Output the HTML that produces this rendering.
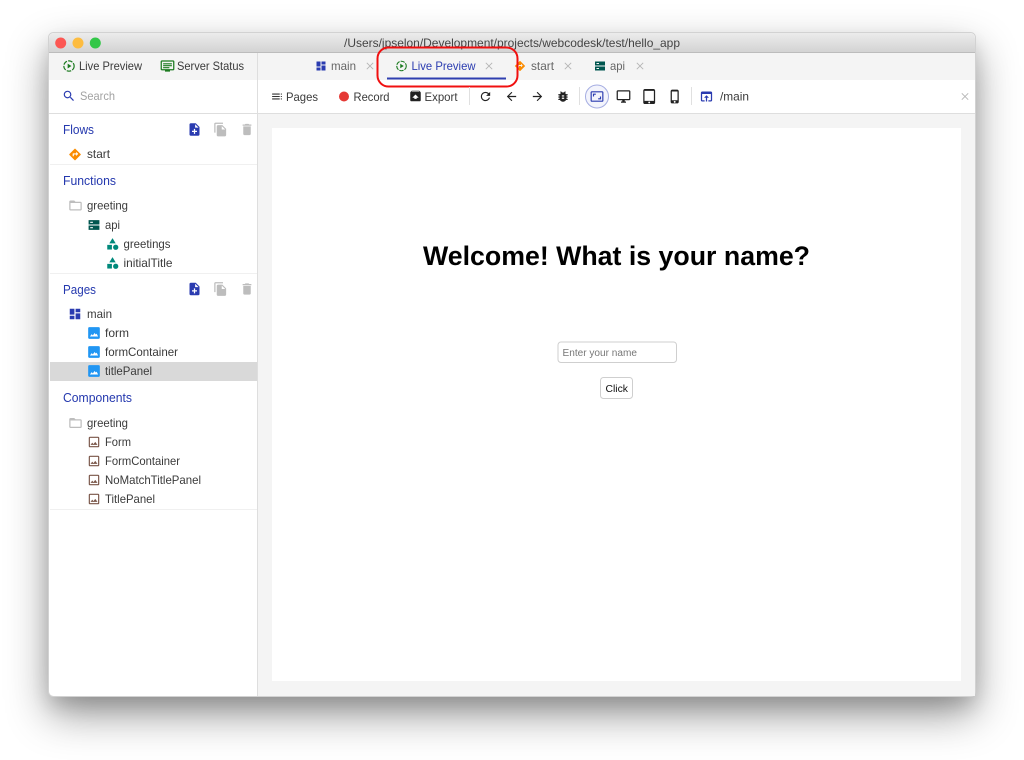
<!DOCTYPE html>
<html><head><meta charset="utf-8"><title>Live Preview</title>
<style>
html,body{margin:0;padding:0;background:#fff;width:1024px;height:760px;overflow:hidden}
#win{position:absolute;left:49px;top:33px;width:926px;height:663px;border-radius:5px;box-shadow:0 18px 42px rgba(0,0,0,.42),0 10px 18px rgba(0,0,0,.12)}
svg{position:absolute;left:0;top:0}
text{font-family:"Liberation Sans",sans-serif;font-size:12px;fill:#3a3a3a}
.b{fill:#2a3bb0}
.h{font-size:13px;fill:#2438ae}
.g{fill:#666}
</style></head><body>
<div id="win"></div>
<svg width="1024" height="760" viewBox="0 0 1024 760" xmlns="http://www.w3.org/2000/svg">
<defs>
<linearGradient id="tb" x1="0" y1="0" x2="0" y2="1"><stop offset="0" stop-color="#ececec"/><stop offset="1" stop-color="#d3d3d3"/></linearGradient>
<symbol id="note" viewBox="0 0 24 24"><path d="M14 2H6c-1.1 0-1.99.9-1.99 2L4 20c0 1.1.89 2 1.99 2H18c1.1 0 2-.9 2-2V8l-6-6zm2 14h-3v3h-2v-3H8v-2h3v-3h2v3h3v2zm-3-7V3.5L18.5 9H13z"/></symbol>
<symbol id="copy" viewBox="0 0 24 24"><path d="M16 1H4c-1.1 0-2 .9-2 2v14h2V3h12V1zm-1 4l6 6v10c0 1.1-.9 2-2 2H7.99C6.89 23 6 22.1 6 21l.01-14c0-1.1.89-2 1.99-2h7zm-1 7h5.5L14 6.5V12z"/></symbol>
<symbol id="trash" viewBox="0 0 24 24"><path d="M6 19c0 1.1.9 2 2 2h8c1.1 0 2-.9 2-2V7H6v12zM19 4h-3.5l-1-1h-5l-1 1H5v2h14V4z"/></symbol>
<symbol id="dir" viewBox="0 0 24 24"><path d="M21.71 11.29l-9-9c-.39-.39-1.02-.39-1.41 0l-9 9c-.39.39-.39 1.02 0 1.41l9 9c.39.39 1.02.39 1.41 0l9-9c.39-.38.39-1.01 0-1.41zM14 14.5V12h-4v3H8v-4c0-.55.45-1 1-1h5V7.5l3.5 3.5-3.5 3.5z"/></symbol>
<symbol id="folder" viewBox="0 0 24 24"><path d="M20 6h-8l-2-2H4c-1.1 0-1.99.9-1.99 2L2 18c0 1.1.9 2 2 2h16c1.1 0 2-.9 2-2V8c0-1.1-.9-2-2-2zm0 12H4V8h16v10z"/></symbol>
<symbol id="dns" viewBox="0 0 24 24"><path fill-rule="evenodd" d="M2 3h20v8H2zM5 6v2h5V6zM2 13h20v8H2zM5 16v2h5v-2z"/></symbol>
<symbol id="cat" viewBox="0 0 24 24"><path d="M12 2l-5.500 9h11z"/><circle cx="17.500" cy="17.500" r="4.500"/><path d="M3 13.500h8v8H3z"/></symbol>
<symbol id="dash" viewBox="0 0 24 24"><path d="M3 13h8V3H3v10zm0 8h8v-6H3v6zm10 0h8V11h-8v10zm0-18v6h8V3h-8z"/></symbol>
<symbol id="img" viewBox="0 0 24 24"><rect x="2" y="2" width="20" height="20" rx="2" fill="#2196f3"/><path d="M5 18l3-4 2 2 3-4 2 2.500 1.500-1.500 2.500 5z" fill="#fff"/></symbol>
<symbol id="cmp" viewBox="0 0 24 24"><path d="M19 5v14H5V5h14m0-2H5c-1.100 0-2 .9-2 2v14c0 1.100.9 2 2 2h14c1.100 0 2-.9 2-2V5c0-1.100-.9-2-2-2zm-4.860 8.860l-3 3.870L9 13.140 6 17h12l-3.860-5.140z"/></symbol>
<symbol id="play" viewBox="0 0 24 24"><circle cx="12" cy="12" r="9.500" fill="none" stroke="#1b7a1f" stroke-width="2.200" stroke-dasharray="8.500 2.200"/><path d="M9.500 7.500l7 4.500-7 4.500z" fill="#1b7a1f"/></symbol>
<symbol id="mon" viewBox="0 0 24 24"><path d="M21 3H3c-1.100 0-2 .9-2 2v12c0 1.100.9 2 2 2h5v2h8v-2h5c1.100 0 2-.9 2-2V5c0-1.100-.9-2-2-2zm0 14H3V5h18v12zM5 7.500h14v1.800H5zM5 10.600h14v1.800H5zM5 13.700h10v1.800H5z"/></symbol>
<symbol id="lines" viewBox="0 0 24 24"><path d="M3 6.500h14v2H3zM3 11h14v2H3zM3 15.500h14v2H3zM19 6.500h2v2h-2zM19 11h2v2h-2zM19 15.500h2v2h-2z"/></symbol>
<symbol id="exp" viewBox="0 0 24 24"><path d="M20.550 5.220l-1.390-1.680C18.880 3.210 18.470 3 18 3H6c-.47 0-.88.21-1.150.55L3.460 5.220C3.170 5.570 3 6.010 3 6.500V19c0 1.100.89 2 2 2h14c1.100 0 2-.9 2-2V6.500c0-.49-.17-.93-.45-1.280zM12 9.500l5.500 5.500H14v2h-4v-2H6.500L12 9.500zM5.120 5l.82-1h12l.93 1H5.120z"/></symbol>
<symbol id="refresh" viewBox="0 0 24 24"><path d="M17.650 6.350C16.200 4.900 14.210 4 12 4c-4.420 0-7.990 3.580-7.990 8s3.570 8 7.990 8c3.730 0 6.840-2.550 7.730-6h-2.080c-.82 2.330-3.040 4-5.650 4-3.310 0-6-2.690-6-6s2.690-6 6-6c1.660 0 3.140.69 4.220 1.780L13 11h7V4l-2.350 2.350z"/></symbol>
<symbol id="back" viewBox="0 0 24 24"><path d="M20 11H7.830l5.590-5.590L12 4l-8 8 8 8 1.410-1.410L7.830 13H20v-2z"/></symbol>
<symbol id="fwd" viewBox="0 0 24 24"><path d="M12 4l-1.410 1.410L16.170 11H4v2h12.170l-5.580 5.590L12 20l8-8z"/></symbol>
<symbol id="bug" viewBox="0 0 24 24"><path d="M20 8h-2.810c-.45-.78-1.070-1.450-1.820-1.960L17 4.410 15.590 3l-2.170 2.170C12.960 5.060 12.490 5 12 5c-.49 0-.96.06-1.410.17L8.410 3 7 4.410l1.620 1.630C7.880 6.550 7.260 7.220 6.810 8H4v2h2.090c-.05.33-.09.66-.09 1v1H4v2h2v1c0 .34.04.67.09 1H4v2h2.810c1.040 1.790 2.970 3 5.190 3s4.150-1.210 5.190-3H20v-2h-2.090c.05-.33.09-.66.09-1v-1h2v-2h-2v-1c0-.34-.04-.67-.09-1H20V8zm-6 8h-4v-2h4v2zm0-4h-4v-2h4v2z"/></symbol>
<symbol id="aspect" viewBox="0 0 24 24"><path d="M19 12h-2v3h-3v2h5v-5zM7 9h3V7H5v5h2V9zm14-6H3c-1.100 0-2 .9-2 2v14c0 1.100.9 2 2 2h18c1.100 0 2-.9 2-2V5c0-1.100-.9-2-2-2zm0 16.010H3V4.990h18v14.020z"/></symbol>
<symbol id="desk" viewBox="0 0 24 24"><path d="M21 2H3c-1.100 0-2 .9-2 2v12c0 1.100.9 2 2 2h7v2H8v2h8v-2h-2v-2h7c1.100 0 2-.9 2-2V4c0-1.100-.9-2-2-2zm0 14H3V4h18v12z"/></symbol>
<symbol id="tab" viewBox="0 0 24 24"><path d="M18.500 0h-14C3.120 0 2 1.120 2 2.500v19C2 22.880 3.120 24 4.500 24h14c1.380 0 2.500-1.120 2.500-2.500v-19C21 1.120 19.880 0 18.500 0zm-7 23c-.83 0-1.500-.67-1.500-1.500s.67-1.500 1.500-1.500 1.500.67 1.500 1.500-.67 1.500-1.500 1.500zm7.500-4H4V3h15v16z"/></symbol>
<symbol id="phone" viewBox="0 0 24 24"><path d="M15.500 1h-8C6.120 1 5 2.120 5 3.500v17C5 21.880 6.120 23 7.500 23h8c1.380 0 2.500-1.120 2.500-2.500v-17C18 2.120 16.880 1 15.500 1zm-4 21c-.83 0-1.500-.67-1.500-1.500s.67-1.500 1.500-1.500 1.500.67 1.500 1.500-.67 1.500-1.500 1.500zm4.500-4H7V4h9v14z"/></symbol>
<symbol id="open" viewBox="0 0 24 24"><path d="M19 4H5c-1.110 0-2 .9-2 2v12c0 1.100.89 2 2 2h4v-2H5V8h14v10h-4v2h4c1.100 0 2-.9 2-2V6c0-1.100-.89-2-2-2zm-7 6l-4 4h3v6h2v-6h3l-4-4z"/></symbol>
<symbol id="search" viewBox="0 0 24 24"><path d="M15.500 14h-.79l-.28-.27C15.410 12.590 16 11.110 16 9.500 16 5.910 13.090 3 9.500 3S3 5.910 3 9.500 5.910 16 9.500 16c1.610 0 3.090-.59 4.230-1.570l.27.28v.79l5 4.990L20.490 19l-4.990-5zm-6 0C7.010 14 5 11.990 5 9.500S7.010 5 9.500 5 14 7.010 14 9.500 11.990 14 9.500 14z"/></symbol>
<symbol id="x" viewBox="0 0 10 10"><path d="M1 1l8 8M9 1l-8 8" stroke="#b5b5b5" stroke-width="1.100" fill="none"/></symbol>
</defs>

<!-- window -->
<rect x="48.500" y="32.500" width="927" height="664" rx="5" fill="#fff" stroke="#d2d2d2"/>
<path d="M49 52V38a5 5 0 0 1 5-5h916a5 5 0 0 1 5 5v14z" fill="url(#tb)"/>
<path d="M49 52.500h926" stroke="#bcbcbc"/>
<circle cx="60.700" cy="43" r="5.500" fill="#fc5753"/>
<circle cx="78" cy="43" r="5.500" fill="#fdbc40"/>
<circle cx="95.300" cy="43" r="5.500" fill="#33c748"/>
<text x="344" y="47" textLength="336" lengthAdjust="spacingAndGlyphs" style="fill:#444">/Users/jpselon/Development/projects/webcodesk/test/hello_app</text>

<!-- top rows -->
<rect x="49" y="53" width="926" height="27" fill="#f4f4f4"/>
<rect x="258" y="114" width="717" height="582" fill="#f4f4f4"/>
<rect x="272" y="128" width="689" height="553" fill="#fff"/>
<path d="M49 113.500h926" stroke="#dedede"/>
<path d="M257.500 53v643" stroke="#dedede"/>

<!-- sidebar top -->
<use href="#play" x="62.500" y="59.500" width="13" height="13"/>
<text x="79" y="70" textLength="63" lengthAdjust="spacingAndGlyphs">Live Preview</text>
<use href="#mon" x="160" y="58.500" width="15" height="15" fill="#1b7a1f"/>
<text x="177" y="70" textLength="67" lengthAdjust="spacingAndGlyphs">Server Status</text>
<use href="#search" x="62" y="89" width="14" height="14" fill="#2a3bb0"/>
<text x="80" y="100" textLength="35" lengthAdjust="spacingAndGlyphs" style="fill:#a2a2a2">Search</text>

<!-- section separators and selected -->
<path d="M50 164.500h207M50 273.500h207M50 509.500h207" stroke="#f0f0f0"/>
<rect x="50" y="362" width="207" height="19" fill="#d9d9d9"/>

<text class="h" x="63" y="134" textLength="31" lengthAdjust="spacingAndGlyphs">Flows</text>
<use href="#note" x="187" y="122" width="15" height="15" fill="#2a3bb0"/>
<use href="#copy" x="213" y="122" width="15" height="15" fill="#bdbdbd"/>
<use href="#trash" x="239.500" y="122" width="15" height="15" fill="#bdbdbd"/>
<use href="#dir" x="68" y="147.500" width="14" height="14" fill="#fb8c00"/>
<text x="87" y="158" textLength="23" lengthAdjust="spacingAndGlyphs">start</text>

<text class="h" x="63" y="185" textLength="53" lengthAdjust="spacingAndGlyphs">Functions</text>
<use href="#folder" x="68" y="198" width="15" height="15" fill="#bdbdbd"/>
<text x="87" y="209.500" textLength="41" lengthAdjust="spacingAndGlyphs">greeting</text>
<use href="#dns" x="87.500" y="218.500" width="13" height="13" fill="#00564f"/>
<text x="105" y="229" textLength="15" lengthAdjust="spacingAndGlyphs">api</text>
<use href="#cat" x="105.500" y="237" width="14" height="14" fill="#00897b"/>
<text x="123.500" y="248" textLength="47" lengthAdjust="spacingAndGlyphs">greetings</text>
<use href="#cat" x="105.500" y="256" width="14" height="14" fill="#00897b"/>
<text x="123.500" y="267" textLength="49" lengthAdjust="spacingAndGlyphs">initialTitle</text>

<text class="h" x="63" y="294" textLength="33" lengthAdjust="spacingAndGlyphs">Pages</text>
<use href="#note" x="187" y="281.500" width="15" height="15" fill="#2a3bb0"/>
<use href="#copy" x="213" y="281.500" width="15" height="15" fill="#bdbdbd"/>
<use href="#trash" x="239.500" y="281.500" width="15" height="15" fill="#bdbdbd"/>
<use href="#dash" x="68" y="307" width="14" height="14" fill="#2a3bb0"/>
<text x="87" y="318" textLength="25" lengthAdjust="spacingAndGlyphs">main</text>
<use href="#img" x="87" y="326" width="14" height="14"/>
<text x="105" y="337" textLength="24" lengthAdjust="spacingAndGlyphs">form</text>
<use href="#img" x="87" y="345" width="14" height="14"/>
<text x="105" y="356" textLength="73" lengthAdjust="spacingAndGlyphs">formContainer</text>
<use href="#img" x="87" y="364" width="14" height="14"/>
<text x="105" y="375" textLength="47" lengthAdjust="spacingAndGlyphs">titlePanel</text>

<text class="h" x="63" y="402" textLength="69" lengthAdjust="spacingAndGlyphs">Components</text>
<use href="#folder" x="68" y="415.500" width="15" height="15" fill="#bdbdbd"/>
<text x="87" y="427" textLength="41" lengthAdjust="spacingAndGlyphs">greeting</text>
<use href="#cmp" x="87" y="435" width="14" height="14" fill="#795548"/>
<text x="105" y="446" textLength="26" lengthAdjust="spacingAndGlyphs">Form</text>
<use href="#cmp" x="87" y="454" width="14" height="14" fill="#795548"/>
<text x="105" y="465" textLength="75" lengthAdjust="spacingAndGlyphs">FormContainer</text>
<use href="#cmp" x="87" y="473" width="14" height="14" fill="#795548"/>
<text x="105" y="484" textLength="96" lengthAdjust="spacingAndGlyphs">NoMatchTitlePanel</text>
<use href="#cmp" x="87" y="492" width="14" height="14" fill="#795548"/>
<text x="105" y="503" textLength="50" lengthAdjust="spacingAndGlyphs">TitlePanel</text>

<!-- tabs -->
<use href="#dash" x="315" y="60" width="12" height="12" fill="#2a3bb0"/>
<text class="g" x="331" y="70" textLength="25" lengthAdjust="spacingAndGlyphs">main</text>
<use href="#x" x="366" y="62" width="8" height="8"/>
<use href="#play" x="395.500" y="60" width="12" height="12"/>
<text class="b" x="411.500" y="70" textLength="64" lengthAdjust="spacingAndGlyphs">Live Preview</text>
<use href="#x" x="485" y="62" width="8" height="8"/>
<rect x="387" y="77.500" width="119" height="2" fill="#2f3fb0"/>
<use href="#dir" x="514" y="60" width="12" height="12" fill="#fb8c00"/>
<text class="g" x="531" y="70" textLength="23" lengthAdjust="spacingAndGlyphs">start</text>
<use href="#x" x="564" y="62" width="8" height="8"/>
<use href="#dns" x="594" y="60" width="12" height="12" fill="#00564f"/>
<text class="g" x="610" y="70" textLength="15" lengthAdjust="spacingAndGlyphs">api</text>
<use href="#x" x="636" y="62" width="8" height="8"/>
<rect x="377.500" y="47.500" width="140" height="39" rx="11" fill="none" stroke="#f01010" stroke-width="2"/>

<!-- toolbar -->
<use href="#lines" x="270.500" y="90" width="13" height="13" fill="#333"/>
<text x="286" y="101" textLength="32" lengthAdjust="spacingAndGlyphs">Pages</text>
<circle cx="344" cy="96.500" r="5" fill="#e53935"/>
<text x="353.500" y="101" textLength="36" lengthAdjust="spacingAndGlyphs">Record</text>
<use href="#exp" x="408.500" y="89" width="14" height="14" fill="#222"/>
<text x="424.500" y="101" textLength="33" lengthAdjust="spacingAndGlyphs">Export</text>
<path d="M469.500 87v18M579.500 87v18M691.500 87v18" stroke="#e0e0e0"/>
<use href="#refresh" x="478.500" y="89.500" width="14" height="14" fill="#222"/>
<use href="#back" x="504.500" y="89.500" width="14" height="14" fill="#222"/>
<use href="#fwd" x="530.500" y="89.500" width="14" height="14" fill="#222"/>
<use href="#bug" x="556" y="89.500" width="14" height="14" fill="#222"/>
<circle cx="597" cy="96.500" r="11.500" fill="#f3f4fc" stroke="#a5adE2"/>
<use href="#aspect" x="590" y="89.500" width="14" height="14" fill="#2a3bb0"/>
<use href="#desk" x="616" y="89" width="15" height="15" fill="#222"/>
<use href="#tab" x="642" y="89" width="15" height="15" fill="#222"/>
<use href="#phone" x="667.500" y="89" width="15" height="15" fill="#222"/>
<use href="#open" x="699" y="89" width="15" height="15" fill="#2a3bb0"/>
<text x="720" y="100.500" textLength="29" lengthAdjust="spacingAndGlyphs">/main</text>
<use href="#x" x="961" y="92.500" width="8" height="8"/>

<!-- preview -->
<text x="423" y="265" textLength="387" lengthAdjust="spacingAndGlyphs" style="font-size:27px;font-weight:700;fill:#000">Welcome! What is your name?</text>
<rect x="558" y="342" width="118.500" height="20.500" rx="3" fill="#fff" stroke="#cfcfcf"/>
<text x="562.500" y="356" textLength="74.500" lengthAdjust="spacingAndGlyphs" style="font-size:10px;fill:#777">Enter your name</text>
<rect x="600.500" y="377.500" width="32" height="21" rx="3" fill="#fff" stroke="#cfcfcf"/>
<text x="605.500" y="392" textLength="22.500" lengthAdjust="spacingAndGlyphs" style="font-size:10.500px;fill:#111">Click</text>
</svg>
</body></html>
